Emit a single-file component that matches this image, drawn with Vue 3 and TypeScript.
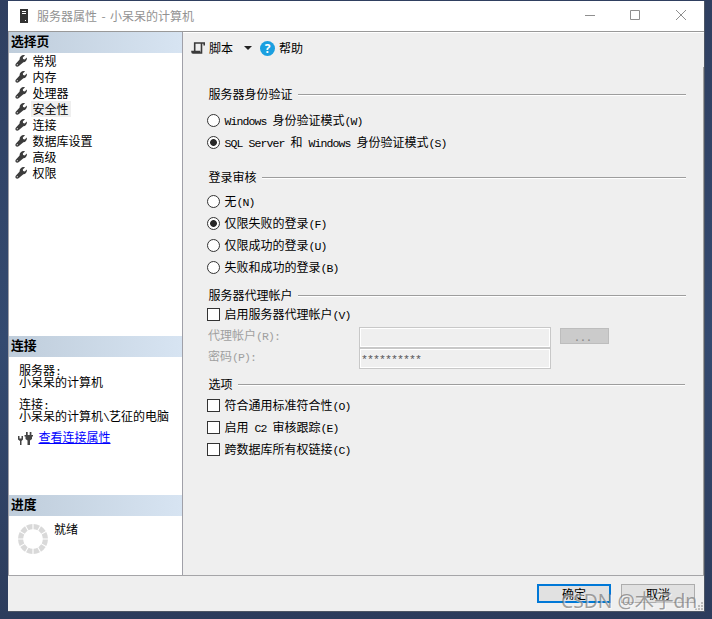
<script setup lang="ts">
import { ref, h, type FunctionalComponent } from 'vue'

interface Choice {
  label: string
  checked: boolean
}

/* Sets half-width runs in a fixed six-pixel cell beside the twelve-pixel ideographs. */
const Txt: FunctionalComponent<{ t: string }> = (props) =>
  h(
    'span',
    { class: 'txt' },
    props.t
      .split(/([\x20-\x7e]+)/)
      .filter((s) => s.length > 0)
      .map((s) => (/^[\x20-\x7e]/.test(s) ? h('span', { class: 'half' }, s) : s)),
  )
Txt.props = ['t']

const pages = ['常规', '内存', '处理器', '安全性', '连接', '数据库设置', '高级', '权限']
const current = ref('安全性')

const authModes: Choice[] = [
  { label: 'Windows 身份验证模式(W)', checked: false },
  { label: 'SQL Server 和 Windows 身份验证模式(S)', checked: true },
]
const audits: Choice[] = [
  { label: '无(N)', checked: false },
  { label: '仅限失败的登录(F)', checked: true },
  { label: '仅限成功的登录(U)', checked: false },
  { label: '失败和成功的登录(B)', checked: false },
]
const options = ['符合通用标准符合性(O)', '启用 C2 审核跟踪(E)', '跨数据库所有权链接(C)']
const segments = Array.from({ length: 12 }, (_, i) => i * 30 + 15)
</script>

<template>
  <div class="desktop">
    <div class="window">
      <header class="titlebar">
        <svg class="server" width="10" height="15" viewBox="0 0 10 15">
          <path d="M1 0h8v14H1z" fill="#333" />
          <path d="M3 2.500h4M3 4.500h4" stroke="#fff" />
          <path d="M6 11h1v1H6z" fill="#fff" />
        </svg>
        <span class="caption">服务器属性 - 小呆呆的计算机</span>
        <svg class="controls" width="104" height="12" viewBox="0 0 104 12">
          <path d="M0 6.500h10M45.500 1.500h9v9h-9zM91 1l10 10M101 1l-10 10" fill="none" stroke="#8f8f8f" />
        </svg>
      </header>

      <div class="body">
        <aside class="side">
          <h2>选择页</h2>
          <ul class="pages">
            <li v-for="p in pages" :key="p" @click="current = p">
              <svg width="12" height="12" viewBox="0 0 12 12">
                <path
                  d="M10 .3 7.800 2.500l.3 1.600 1.600.3 2.100-2c.6 2.200-.9 4.500-3.400 4.800L3.600 11.200C1.700 12.600-.5 10.600.8 8.800L4.600 4.600C4.300 1.500 7.300-.6 10 .3z"
                  fill="#3c3c3c"
                />
                <circle cx="2.300" cy="9.700" r=".6" fill="#ddd" />
              </svg>
              <span :class="['page', { on: p === current }]">{{ p }}</span>
            </li>
          </ul>

          <h2>连接</h2>
          <div class="conn">
            <Txt class="line" t="服务器:" />
            <Txt class="line" t="小呆呆的计算机" />
            <Txt class="line second" t="连接:" />
            <Txt class="line" t="小呆呆的计算机\艺征的电脑" />
            <div class="linkrow">
              <svg width="15" height="14" viewBox="0 0 15 14">
                <path d="M0 4h1.500v2.500h2V4H5v3.500L3.500 9v4H2V9L0 7.500z" fill="#444" />
                <path d="M8 0h1.700v3h2V0h1.700v3H15v1.500h-1V7l-2 1.500V13H9.500V8.500L7.500 7V4.500H6.500V3H8z" fill="#444" />
              </svg>
              <a>查看连接属性</a>
            </div>
          </div>

          <h2>进度</h2>
          <div class="progress">
            <svg width="30" height="30" viewBox="-15 -15 30 30">
              <path
                v-for="a in segments"
                :key="a"
                d="M-3.300-14.600A15 15 0 0 1 3.300-14.600L2-9.600A10 10 0 0 0-2-9.600z"
                fill="#d9d9d9"
                :transform="`rotate(${a})`"
              />
            </svg>
            <span>就绪</span>
          </div>
        </aside>

        <main class="main">
          <div class="toolbar">
            <svg width="15" height="14" viewBox="0 0 15 14">
              <path
                d="M3.700 10V2H13.200V4.500M10.500 2V12H2Q1 12 1 10.500H8.500V12"
                fill="none"
                stroke="#3a3a3a"
                stroke-width="1.600"
              />
            </svg>
            <span class="script">脚本</span>
            <svg class="arrow" width="8" height="4" viewBox="0 0 8 4"><path d="M0 0h8L4 4z" fill="#222" /></svg>
            <span class="help">?</span>
            <span>帮助</span>
          </div>

          <section class="auth">
            <div class="legend"><Txt t="服务器身份验证" /><i /></div>
            <div v-for="c in authModes" :key="c.label" class="choice">
              <span :class="['radio', { checked: c.checked }]" /><Txt :t="c.label" />
            </div>
          </section>

          <section class="audit">
            <div class="legend"><Txt t="登录审核" /><i /></div>
            <div v-for="c in audits" :key="c.label" class="choice">
              <span :class="['radio', { checked: c.checked }]" /><Txt :t="c.label" />
            </div>
          </section>

          <section class="proxy">
            <div class="legend"><Txt t="服务器代理帐户" /><i /></div>
            <div class="choice"><span class="check" /><Txt t="启用服务器代理帐户(V)" /></div>
            <div class="field">
              <Txt class="name" t="代理帐户(R):" />
              <span class="input" />
              <span class="browse"><Txt t="..." /></span>
            </div>
            <div class="field">
              <Txt class="name" t="密码(P):" />
              <span class="input"><Txt t="**********" /></span>
            </div>
          </section>

          <section class="opts">
            <div class="legend"><Txt t="选项" /><i /></div>
            <div v-for="o in options" :key="o" class="choice"><span class="check" /><Txt :t="o" /></div>
          </section>
        </main>
      </div>

      <footer class="footer">
        <button class="ok">确定</button>
        <button>取消</button>
      </footer>
      <svg class="grip" width="8" height="8" viewBox="0 0 8 8">
        <path d="M6 0h2v2H6zM3 3h2v2H3zM6 3h2v2H6zM0 6h2v2H0zM3 6h2v2H3zM6 6h2v2H6z" fill="#bbb" />
      </svg>
    </div>
    <div class="watermark">CSDN @木子dn</div>
  </div>
</template>

<style>
body {
  overflow: hidden;
}
.half {
  font-family: 'Liberation Mono', monospace;
  font-size: 11.500px;
  line-height: 12px;
  letter-spacing: -0.9px;
  white-space: pre;
}
</style>

<style scoped>
* {
  box-sizing: border-box;
}
.desktop {
  position: relative;
  width: 712px;
  height: 619px;
  padding: 1px 7px 7px 8px;
  background: linear-gradient(180deg, #2f3f60 0, #344a70 55%, #2c3c5c 100%);
  font: 12px/16px 'Noto Sans CJK SC', sans-serif;
  color: #000;
}
.window {
  position: relative;
  display: flex;
  flex-direction: column;
  width: 697px;
  height: 611px;
  background: #efefef;
  border-right: 1px solid #4d5665;
  border-bottom: 1px solid #4d5665;
}
.titlebar {
  display: flex;
  align-items: center;
  height: 30px;
  padding: 0 14px 0 11px;
  background: #fff;
  color: #929292;
}
.caption {
  margin-left: 8px;
  word-spacing: 1.7px;
}
.controls {
  margin: -2px 1px 0 auto;
}
.txt {
  white-space: nowrap;
}
.body {
  display: flex;
  height: 545px;
  border-top: 1px solid #999;
  border-bottom: 1px solid #a5a5a8;
}
.side {
  flex: none;
  width: 175px;
  background: #fff;
  border-left: 1px solid #a0a0a8;
  border-right: 1px solid #a0a0a8;
}
h2 {
  height: 21px;
  margin: 0;
  padding-left: 2px;
  font-size: 12.800px;
  line-height: 18px;
  font-weight: 700;
  background: linear-gradient(90deg, #bfcddb, #d7e4f2);
}
.pages {
  height: 283px;
  margin: 0;
  padding: 0 0 0 6px;
  list-style: none;
}
.pages li {
  display: flex;
  align-items: center;
  height: 16px;
  gap: 4px;
}
.page {
  padding: 0 2px 0 1.500px;
  line-height: 16px;
}
.page.on {
  background: #efefef;
}
.conn {
  height: 138px;
  padding: 7px 0 0 10px;
}
.line {
  display: block;
  height: 12px;
  line-height: 12px;
}
.second {
  margin-top: 10px;
}
.linkrow {
  display: flex;
  align-items: center;
  height: 16px;
  margin: 7px 0 0 -1px;
  gap: 5.500px;
}
.linkrow svg {
  margin-top: 3px;
}
.linkrow a {
  color: #00f;
  text-decoration: underline;
  text-underline-offset: 1px;
}
.progress {
  display: flex;
  gap: 6px;
  padding: 5px 0 0 9px;
}
.progress svg {
  margin-top: 3px;
}
.main {
  flex: 1;
  padding-left: 8px;
  border-top: 1px solid #fff;
  border-right: 1px solid transparent;
  border-image: linear-gradient(180deg, #fff 0 1px, #efefef 1px 35px, #a0a0a0 35px) 1 1 0 0;
}
.toolbar {
  display: flex;
  align-items: center;
  height: 30px;
}
.script {
  margin-left: 3px;
}
.arrow {
  margin: 0 8px 0 11px;
}
.help {
  width: 15px;
  height: 15px;
  margin-right: 4px;
  border-radius: 50%;
  background: #1a9fe0;
  color: #fff;
  font: 700 12px/15px 'Open Sans', sans-serif;
  text-align: center;
}
section {
  padding-left: 16px;
}
.legend {
  display: flex;
  align-items: center;
  height: 16px;
  padding-left: 1.500px;
  gap: 5.500px;
}
.legend i {
  flex: 1;
  height: 2px;
  margin: 1px 17px 0 0;
  background: linear-gradient(#9d9d9d 50%, #fff 50%);
}
.auth {
  padding-top: 23px;
}
.auth .legend {
  margin-bottom: 7px;
}
.audit {
  padding-top: 16px;
}
.audit .legend {
  margin-bottom: 5px;
}
.choice {
  display: flex;
  align-items: center;
  height: 22px;
  gap: 4.500px;
}
.radio,
.check {
  flex: none;
  width: 13px;
  height: 13px;
  border: 1px solid #333;
  background: #fff;
}
.radio {
  border-radius: 50%;
}
.radio.checked {
  background: radial-gradient(circle, #282828 0 3px, #fff 3.800px);
}
.proxy {
  padding-top: 9px;
}
.proxy .legend {
  margin-bottom: -1px;
}
.proxy .choice {
  height: 24px;
  margin-bottom: 1px;
}
.field {
  display: flex;
  height: 21px;
  padding-left: 2px;
}
.name {
  width: 151px;
  margin-left: -1px;
  color: #a0a0a0;
}
.input {
  width: 192px;
  height: 21px;
  padding-left: 1px;
  border: 1px solid #c8c8c8;
  box-shadow: inset 0 0 0 1px #fff;
  color: #555;
  line-height: 18px;
}
.browse {
  width: 49px;
  height: 16px;
  padding-right: 4px;
  margin: 1px 0 0 9px;
  border: 1px solid #bdbdbd;
  background: #cbcbcb;
  color: #888;
  text-align: center;
  line-height: 14px;
}
.opts {
  padding-top: 7px;
}
.opts .legend {
  margin-bottom: 2px;
}
.opts .legend i {
  margin-right: 18px;
}
.footer {
  display: flex;
  justify-content: flex-end;
  gap: 10px;
  padding: 8px 9px 0 0;
}
button {
  width: 74px;
  height: 19px;
  padding: 0;
  border: 1px solid #adadad;
  background: #e1e1e1;
  color: #000;
  font: 12px/16px 'Noto Sans CJK SC', sans-serif;
}
.ok {
  border: 2px solid #0078d7;
}
.grip {
  position: absolute;
  right: 1px;
  bottom: 1px;
}
.watermark {
  position: absolute;
  left: 561px;
  top: 589px;
  font: 400 19.300px/24px 'Noto Sans', 'Noto Sans CJK SC', sans-serif;
  color: rgba(120, 120, 120, 0.7);
  text-shadow: 1px 1px 0 rgba(255, 255, 255, 0.6);
  white-space: nowrap;
}
</style>
